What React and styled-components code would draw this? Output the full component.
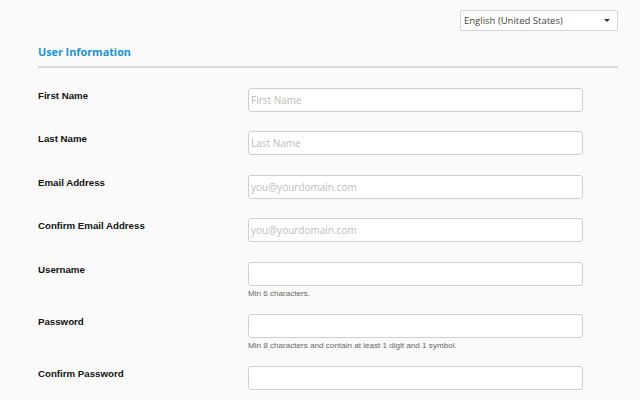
import React from "react";
import styled, { createGlobalStyle } from "styled-components";

const GlobalStyle = createGlobalStyle`
  html, body {
    margin: 0;
    padding: 0;
    background: #fafafa;
  }
  * { box-sizing: border-box; }
`;

const Page = styled.div`
  width: 640px;
  height: 400px;
  overflow: hidden;
  padding: 10px 22px 0 38px;
  background: #fafafa;
`;

const TopBar = styled.div`
  display: flex;
  justify-content: flex-end;
`;

const LangWrap = styled.div`
  position: relative;
  width: 158px;
  height: 21px;
`;

const LangSelect = styled.select`
  appearance: none;
  width: 100%;
  height: 100%;
  margin: 0;
  padding: 0 16px 0 3px;
  border: 1px solid #d4d4d4;
  border-radius: 2px;
  background: #fff;
  font-family: "Open Sans", sans-serif;
  font-size: 9.5px;
  color: #444;
  outline: none;
`;

const Caret = styled.span`
  position: absolute;
  right: 8px;
  top: 9px;
  width: 0;
  height: 0;
  border-left: 3px solid transparent;
  border-right: 3px solid transparent;
  border-top: 3px solid #333;
  pointer-events: none;
`;

const Heading = styled.h2`
  margin: 12px 0 0;
  padding-bottom: 5px;
  border-bottom: 2px solid #d9d9d9;
  font-family: "Open Sans", sans-serif;
  font-size: 10.8px;
  font-weight: 700;
  line-height: 18px;
  color: #1a93d4;
`;

const Form = styled.div`
  margin-top: 20px;
  width: 545px;
`;

const Row = styled.div`
  display: grid;
  grid-template-columns: 210px 335px;
  padding-bottom: ${(p) => (p.$help ? "15px" : "19.4px")};
`;

const Label = styled.label`
  padding-top: 2px;
  font-family: "Liberation Sans", Arial, sans-serif;
  font-size: 9.7px;
  font-weight: 700;
  line-height: 12px;
  color: #111;
`;

const Field = styled.div`
  display: flex;
  flex-direction: column;
`;

const Input = styled.input`
  width: 335px;
  height: 24px;
  margin: 0;
  padding: 0 2px;
  border: 1px solid #cfcfcf;
  border-radius: 3px;
  background: #fff;
  font-family: "Open Sans", sans-serif;
  font-size: 10px;
  color: #333;
  outline: none;

  &::placeholder {
    color: #bdbdbd;
  }
`;

const Help = styled.div`
  margin-top: 3px;
  font-family: "Liberation Sans", Arial, sans-serif;
  font-size: 8.1px;
  line-height: 10px;
  color: #666;
`;

const fields = [
  { label: "First Name", placeholder: "First Name" },
  { label: "Last Name", placeholder: "Last Name" },
  { label: "Email Address", placeholder: "you@yourdomain.com" },
  { label: "Confirm Email Address", placeholder: "you@yourdomain.com" },
  { label: "Username", help: "Min 6 characters." },
  {
    label: "Password",
    type: "password",
    help: "Min 8 characters and contain at least 1 digit and 1 symbol.",
  },
  { label: "Confirm Password", type: "password" },
];

export default function App() {
  return (
    <>
      <GlobalStyle />
      <Page>
        <TopBar>
          <LangWrap>
            <LangSelect defaultValue="en-US">
              <option value="en-US">English (United States)</option>
            </LangSelect>
            <Caret />
          </LangWrap>
        </TopBar>
        <Heading>User Information</Heading>
        <Form>
          {fields.map((f) => (
            <Row key={f.label} $help={!!f.help}>
              <Label>{f.label}</Label>
              <Field>
                <Input type={f.type || "text"} placeholder={f.placeholder || ""} />
                {f.help && <Help>{f.help}</Help>}
              </Field>
            </Row>
          ))}
        </Form>
      </Page>
    </>
  );
}
